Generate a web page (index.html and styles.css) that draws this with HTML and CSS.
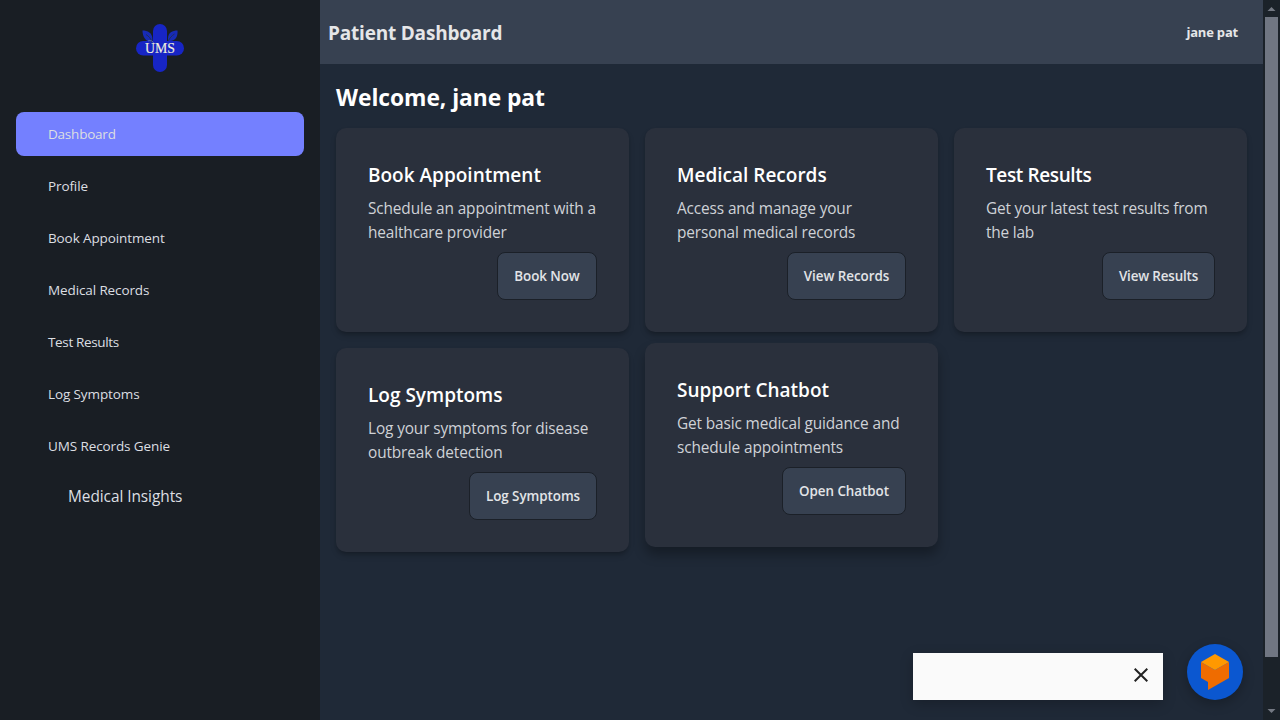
FILE: index.html
```html
<!DOCTYPE html>
<html lang="en">
<head>
<meta charset="utf-8">
<title>Patient Dashboard</title>
<link rel="stylesheet" href="styles.css">
</head>
<body>
<div class="app">
  <aside class="sidebar">
    <svg class="logo" viewBox="0 0 48 48" width="48" height="48">
      <rect x="17" y="0" width="14" height="48" rx="7" fill="#1725c5"/>
      <rect x="0" y="17" width="48" height="14.500" rx="7.250" fill="#1725c5"/>
      <path d="M6.500 6.500c5 0 10 2 10 9v2h-4c-4-2-6-6-6-11zM41.500 6.500c-5 0-9.500 2-9.500 8v2.500h3c5-1 7-5 6.500-10.500z" fill="#172bb4"/>
      <path d="M10 10.500c3 2 5 4 6 8M38.500 10c-3 2-5 4-6 7" fill="none" stroke="#202c58" stroke-width="1"/>
      <path d="M12 17c3-1 5 0 6 3" fill="none" stroke="#6f7fae" stroke-width=".8"/>
      <text class="logo-text" x="24" y="29.300" text-anchor="middle" textLength="30" lengthAdjust="spacingAndGlyphs">UMS</text>
    </svg>
    <nav class="menu">
      <a class="item active">Dashboard</a>
      <a class="item">Profile</a>
      <a class="item">Book Appointment</a>
      <a class="item">Medical Records</a>
      <a class="item tight">Test Results</a>
      <a class="item">Log Symptoms</a>
      <a class="item">UMS Records Genie</a>
      <a class="subitem">Medical Insights</a>
    </nav>
  </aside>
  <main class="main">
    <header class="navbar">
      <span class="title">Patient Dashboard</span>
      <span class="user">jane pat</span>
    </header>
    <section class="content">
      <h1 class="welcome">Welcome, jane pat</h1>
      <div class="grid">
        <article class="card"><h2 class="card-title">Book Appointment</h2><p class="card-text">Schedule an appointment with a<br>healthcare provider</p><button class="btn btn-book">Book Now</button></article>
        <article class="card"><h2 class="card-title">Medical Records</h2><p class="card-text">Access and manage your<br>personal medical records</p><button class="btn btn-records">View Records</button></article>
        <article class="card"><h2 class="card-title tight">Test Results</h2><p class="card-text latest">Get your latest test results from<br>the lab</p><button class="btn btn-results">View Results</button></article>
        <article class="card"><h2 class="card-title">Log Symptoms</h2><p class="card-text">Log your symptoms for disease<br>outbreak detection</p><button class="btn btn-log">Log Symptoms</button></article>
        <article class="card raised"><h2 class="card-title">Support Chatbot</h2><p class="card-text">Get basic medical guidance and<br>schedule appointments</p><button class="btn btn-chat">Open Chatbot</button></article>
      </div>
    </section>
  </main>
  <div class="scrollbar">
    <svg width="17" height="17"><path d="M8 11h8l-4-4z" fill="#747983" transform="translate(-3.500 0)"/></svg>
    <div class="thumb"></div>
    <svg class="down" width="17" height="17"><path d="M4.500 6h8l-4 4z" fill="#747983"/></svg>
  </div>
</div>
<div class="chat">
  <div class="chat-tip"><svg width="14" height="14" viewBox="0 0 14 14"><path d="M.7.700l12.600 12.600M13.300.700L.7 13.300" stroke="#222" stroke-width="2"/></svg></div>
  <div class="chat-button">
    <svg width="28" height="36" viewBox="0 0 28 36"><path d="M0 8l14 8 14-8v16L7 36v-8l-7-4z" fill="#ef6c00"/><path d="M14 0l14 8-14 8L0 8z" fill="#ff9800"/></svg>
  </div>
</div>
</body>
</html>
```
FILE: styles.css
```css
* { box-sizing: border-box; }
body { margin: 0; overflow: hidden; background: #1f2937; color: #dcdee2; font-family: "Open Sans", "Noto Sans", sans-serif; }
.app { display: flex; width: 1280px; height: 720px; }
.sidebar { width: 320px; background: #191e24; display: flex; flex-direction: column; align-items: center; padding: 24px 16px; }
.logo { display: block; margin-bottom: 40px; }
.logo-text { font-family: "Liberation Serif", serif; font-size: 14.500px; fill: #eeeedd; stroke: #eeeedd; stroke-width: .15; }
.menu { width: 100%; display: flex; flex-direction: column; gap: 8px; }
.item { height: 44px; line-height: 44px; padding-left: 32px; border-radius: 8px; font-size: 13.500px; font-weight: 500; letter-spacing: -.11px; }
.item.tight { letter-spacing: -.35px; }
.active { background: #7480ff; letter-spacing: -.22px; }
.subitem { font-size: 15.400px; line-height: 24px; margin-top: 9px; padding-left: 52px; letter-spacing: -.05px; }
.main { width: 943px; display: flex; flex-direction: column; }
.navbar { height: 64px; background: #374151; display: flex; justify-content: space-between; align-items: center; padding: 0 25px 0 8px; }
.title { padding-top: 2px; font-size: 19px; font-weight: 700; color: #e5e6e8; letter-spacing: -.2px; }
.user { font-size: 13px; font-weight: 700; color: #e5e6e8; letter-spacing: -.2px; }
.content { padding: 16px; }
.welcome { margin: 0 0 12px; font-size: 22.800px; line-height: 36px; font-weight: 700; color: #fff; letter-spacing: -.05px; }
.grid { display: grid; grid-template-columns: repeat(3, 293px); gap: 16px; }
.card { height: 204px; padding: 32px; border-radius: 10px; background: #2a303c; display: flex; flex-direction: column; box-shadow: 0 4px 6px -1px rgba(0,0,0,.22), 0 2px 4px -2px rgba(0,0,0,.2); white-space: nowrap; }
.raised { transform: translateY(-5px); box-shadow: 0 8px 12px rgba(0,0,0,.3); }
.card-title { margin: 0 0 7px; font-size: 19px; line-height: 30px; font-weight: 600; color: #fff; }
.card-title.tight { letter-spacing: -.38px; }
.card-text { margin: 0 0 7px; font-size: 15.400px; line-height: 24px; color: #cfd2d7; letter-spacing: -.13px; }
.card-text.latest { letter-spacing: -.19px; }
.btn { align-self: flex-end; width: 100px; height: 48px; padding: 0; border: 1px solid #1b2028; border-radius: 8px; background: #374151; color: #e2e4e7; font: 600 13.400px "Open Sans", "Noto Sans", sans-serif; letter-spacing: -.05px; }
.btn-records { width: 119px; }
.btn-results { width: 113px; letter-spacing: -.15px; }
.btn-log { width: 128px; }
.btn-chat { width: 124px; }
.scrollbar { width: 17px; background: #1b2229; display: flex; flex-direction: column; }
.scrollbar svg { display: block; }
.thumb { height: 640px; margin: 0 2px; background: #707682; }
.down { margin-top: auto; }
.chat { position: fixed; left: 913px; top: 644px; display: flex; align-items: flex-start; gap: 24px; }
.chat-tip { width: 250px; height: 47px; margin-top: 9px; padding: 15px 15px 0 0; background: #fafafa; display: flex; justify-content: flex-end; box-shadow: 0 4px 12px rgba(0,0,0,.22); }
.chat-button { width: 56px; height: 56px; border-radius: 50%; background: #0b57d0; display: flex; justify-content: center; align-items: center; box-shadow: 0 4px 12px rgba(0,0,0,.25); }
```
